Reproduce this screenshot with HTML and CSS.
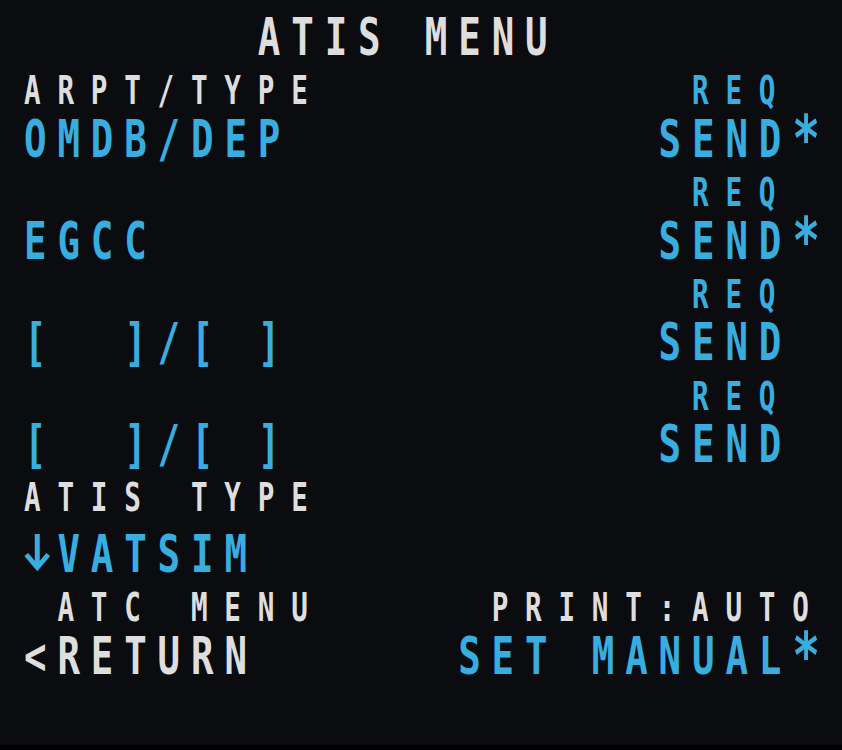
FILE: index.html
```html
<!DOCTYPE html>
<html lang="en">
<head>
<meta charset="utf-8">
<title>ATIS MENU</title>
<link rel="stylesheet" href="styles.css">
</head>
<body>
<main class="screen">
  <div class="row title"><span class="white">       ATIS MENU</span></div>

  <section class="pair">
    <div class="row label"><span class="white">ARPT/TYPE</span><span class="blue r">REQ </span></div>
    <div class="row data"><span class="blue">OMDB/DEP</span><span class="blue r">SEND<span class="star">*</span></span></div>
  </section>

  <section class="pair">
    <div class="row label"><span class="blue r">REQ </span></div>
    <div class="row data"><span class="blue">EGCC</span><span class="blue r">SEND<span class="star">*</span></span></div>
  </section>

  <section class="pair">
    <div class="row label"><span class="blue r">REQ </span></div>
    <div class="row data"><span class="blue">[  ]/[ ]</span><span class="blue r">SEND </span></div>
  </section>

  <section class="pair">
    <div class="row label"><span class="blue r">REQ </span></div>
    <div class="row data"><span class="blue">[  ]/[ ]</span><span class="blue r">SEND </span></div>
  </section>

  <section class="pair">
    <div class="row label"><span class="white">ATIS TYPE</span></div>
    <div class="row data"><span class="blue"><svg class="arrow" viewBox="0 0 33.4 52" preserveAspectRatio="none" role="img" aria-label="↓"><path d="M13.5 14V47M2.5 34.5L13.5 47.5L24.5 34.5"/></svg>VATSIM</span></div>
  </section>

  <section class="pair">
    <div class="row label"><span class="white"> ATC MENU</span><span class="white r">PRINT:AUTO</span></div>
    <div class="row data"><span class="white">&lt;RETURN</span><span class="blue r">SET MANUAL<span class="star">*</span></span></div>
  </section>
</main>
</body>
</html>
```
FILE: styles.css
```css
html {
  background: #000;
}

body {
  margin: 0;
  height: 745px;
  overflow: hidden;
  background: #0b0c0f;
  font-family: "DejaVu Sans Mono", monospace;
  font-weight: bold;
}

/* 24-column character grid: 33.4px pitch on screen.
   Glyphs are condensed horizontally to match the MCDU font. */
.screen {
  width: 1113.4px;
  padding: 11px 0 0 33.33px;
  transform: scaleX(0.72);
  transform-origin: 0 0;
}

.row {
  display: flex;
  align-items: baseline;
  white-space: pre;
  line-height: 1;
}

.title,
.data {
  font-size: 52px;
  letter-spacing: 15.09px;
}

.title {
  margin-bottom: 2.2px;
}

.label {
  font-size: 38.4px;
  letter-spacing: 23.27px;
}

.pair {
  margin-top: 9.3px;
}

.data {
  margin-top: 2.1px;
}

.r {
  margin-left: auto;
}

.star {
  font-size: 64px;
  letter-spacing: 7.86px;
  line-height: 0;
  vertical-align: -4px;
}

.arrow {
  width: 46.39px;
  height: 52px;
  vertical-align: baseline;
  fill: none;
  stroke: currentColor;
  stroke-width: 5;
}

.white {
  color: #dedede;
}

.blue {
  color: #38aee0;
}
```
